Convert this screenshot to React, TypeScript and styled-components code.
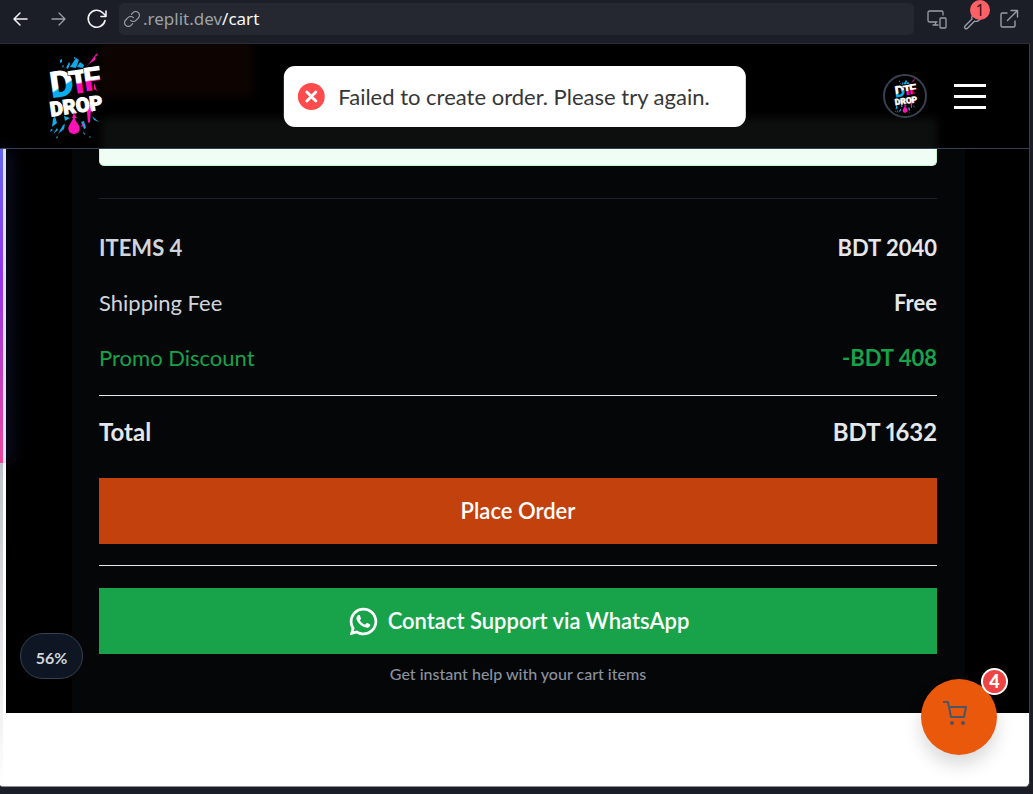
import React from "react";
import styled, { createGlobalStyle } from "styled-components";
import { RiWhatsappLine } from "react-icons/ri";

const GlobalStyle = createGlobalStyle`
  *, *::before, *::after { box-sizing: border-box; }
  body {
    margin: 0;
    background: #1b1e27;
    font-family: Lato, "Open Sans", sans-serif;
  }
  button { font-family: inherit; border: 0; padding: 0; cursor: pointer; }
`;

const Shell = styled.div`
  display: flex;
  flex-direction: column;
  min-height: 100vh;
  padding: 0 3px 7px 0;
  background: #1b1e27;
`;

const BrowserBar = styled.div`
  display: flex;
  align-items: center;
  height: 44px;
  padding: 3px 10px 8px 10px;
  gap: 16px;
  border-bottom: 1px solid #2b2e38;
  background: #1b1e27;
`;

const ToolButton = styled.button<{ $dim?: boolean }>`
  position: relative;
  display: flex;
  align-items: center;
  justify-content: center;
  width: 22px;
  height: 22px;
  background: none;
  color: ${(p) => (p.$dim ? "#9a9ea8" : "#f2f3f5")};
`;

const AddressBar = styled.label`
  display: flex;
  flex: 1;
  align-items: center;
  gap: 3px;
  height: 32px;
  margin-left: -5px;
  margin-right: -4px;
  padding: 0 5px;
  border-radius: 5px;
  background: #252831;
  color: #9da2a6;
`;

const Address = styled.span`
  font: 17px/22px "Noto Sans", sans-serif;
  b { font-weight: 400; color: #f5f9fc; }
`;

const Nav = styled.nav`
  display: flex;
  gap: 16px;
`;

const Tools = styled(Nav)`
  gap: 14px;
`;

const AlertCount = styled.span`
  position: absolute;
  top: -8px;
  right: -6px;
  width: 20px;
  height: 20px;
  border-radius: 50%;
  background: #ff6166;
  color: #3c1518;
  font: 16px/20px "Noto Sans", sans-serif;
  text-align: center;
`;

const Preview = styled.div`
  position: relative;
  display: flex;
  flex: 1;
  flex-direction: column;
  border-right: 1px solid #3a3d46;
  border-bottom: 1px solid #8e9096;
  border-radius: 0 0 5px 3px;
  overflow: hidden;
  background: #fff;
`;

const Header = styled.header`
  position: relative;
  display: flex;
  align-items: center;
  justify-content: space-between;
  height: 105px;
  padding: 0 43px 0 46px;
  border-bottom: 1px solid #374151;
  background: #000;
  overflow: hidden;
  &::before, &::after {
    content: "";
    position: absolute;
    filter: blur(4px);
  }
  &::before { left: 99px; top: -8px; width: 154px; height: 61px; background: #0d0401; }
  &::after { left: 101px; right: 92px; top: 74px; height: 44px; background: #0d0e0e; }
`;

const LogoLink = styled.a`
  display: flex;
  z-index: 1;
`;

const HeaderActions = styled.div`
  display: flex;
  align-items: center;
  gap: 27px;
  z-index: 1;
`;

const Avatar = styled.button`
  display: flex;
  align-items: center;
  justify-content: center;
  width: 44px;
  height: 44px;
  border: 2px solid #374151;
  border-radius: 50%;
  background: #000;
`;

const MenuButton = styled.button`
  display: flex;
  flex-direction: column;
  justify-content: space-between;
  width: 32px;
  height: 25px;
  background: none;
  span { height: 3px; background: #fff; }
`;

const Toast = styled.div`
  position: absolute;
  top: 22px;
  left: 50%;
  transform: translateX(-50%);
  z-index: 3;
  display: flex;
  align-items: center;
  gap: 14px;
  height: 61px;
  padding: 0 36px 0 14px;
  border-radius: 11px;
  background: #fff;
  color: #363636;
  font-size: 22px;
  line-height: 30px;
  white-space: nowrap;
`;

const Page = styled.div`
  display: flex;
`;

const Progress = styled.div`
  position: relative;
  flex: none;
  width: 6px;
  margin-bottom: -74px;
  background: linear-gradient(#b9bcc2, #c4c7cc 55%, #fff);
  border-right: 3px solid #fff;
`;

const ProgressFill = styled.div`
  width: 6px;
  height: 314px;
  border-right: 3px solid #dfe4fb;
  background: linear-gradient(#6366f1, #9333ea 40%, #ec4899);
  background-clip: padding-box;
  box-shadow: 2px 0 18px #3b4ec070;
`;

const Main = styled.main`
  flex: 1;
  padding: 0 64px 0 66px;
  background: #000;
`;

const Card = styled.section`
  padding: 0 28px 28px 27px;
  background: #040608;
`;

const Notice = styled.div`
  height: 17px;
  border: 1px solid #bbf7d0;
  border-top: 0;
  border-radius: 0 0 5px 5px;
  background: #f0fdf4;
`;

const Summary = styled.dl`
  display: flex;
  flex-direction: column;
  gap: 27px;
  margin: 32px 0 0;
  padding: 35px 0 23px;
  border-top: 1px solid #1f2329;
`;

const Row = styled.div<{ $tone?: "green" | "total" }>`
  display: flex;
  justify-content: space-between;
  font-size: ${(p) => (p.$tone === "total" ? 24 : 22)}px;
  line-height: 28px;
  font-variant-numeric: ${(p) => (p.$tone === "total" ? "proportional-nums" : "normal")};
  color: ${(p) => (p.$tone === "green" ? "#16a34a" : p.$tone === "total" ? "#e5e7eb" : "#d1d5db")};
  dt { font-weight: ${(p) => (p.$tone === "total" ? 700 : 400)}; }
  dd { margin: 0; font-weight: 700; color: ${(p) => (p.$tone === "green" ? "#16a34a" : "#e5e7eb")}; }
`;

const Strong = styled.span`
  font-weight: 700;
`;

const TotalBlock = styled.dl`
  margin: 0;
  padding: 22px 0 32px;
  border-top: 1px solid #e5e7eb;
`;

const ActionButton = styled.button<{ $color: string }>`
  display: flex;
  align-items: center;
  justify-content: center;
  gap: 8px;
  width: 100%;
  height: 66px;
  background: ${(p) => p.$color};
  color: #fff;
  font-size: 22px;
  line-height: 28px;
  font-weight: 600;
`;

const Support = styled.div`
  margin-top: 21px;
  padding-top: 22px;
  border-top: 1px solid #e5e7eb;
`;

const Hint = styled.p`
  margin: 9px 0 0;
  color: #8b919d;
  font-size: 16px;
  font-weight: 500;
  line-height: 22px;
  text-align: center;
`;

const Footer = styled.div`
  flex: 1;
  min-height: 73px;
`;

const ScrollPill = styled.div`
  position: absolute;
  left: 20px;
  bottom: 107px;
  z-index: 2;
  width: 63px;
  height: 46px;
  padding-top: 3px;
  border: 1px solid #374151;
  border-radius: 23px;
  background: #0f1623;
  color: #d1d5db;
  font-size: 16px;
  font-weight: 700;
  line-height: 42px;
  text-align: center;
`;

const CartButton = styled.button`
  position: absolute;
  right: 32px;
  bottom: 31px;
  z-index: 2;
  width: 76px;
  height: 76px;
  padding: 2px 8px 8px 0;
  border-radius: 50%;
  background: #ea580c;
  box-shadow: 0 10px 18px #00000026;
`;

const CartCount = styled.span`
  position: absolute;
  top: -11px;
  right: -11px;
  width: 27px;
  height: 27px;
  border: 2px solid #fff;
  border-radius: 50%;
  background: #ef4444;
  color: #fff;
  font-size: 18px;
  font-weight: 900;
  line-height: 23px;
  text-align: center;
`;

function LogoMark({ width, height, id }: { width: number; height: number; id: string }) {
  const cyan = `${id}-cyan`;
  const pink = `${id}-pink`;
  const face = { fontFamily: 'Roboto, "Liberation Sans", sans-serif', fontWeight: 900 };
  return (
    <svg width={width} height={height} viewBox="0 0 58 86" role="img" aria-label="DTF Drop">
      <defs>
        <linearGradient id={cyan} x1="0" y1="0" x2="0.25" y2="1">
          <stop offset="0.62" stopColor="#fff" />
          <stop offset="0.66" stopColor="#08aef0" />
        </linearGradient>
        <linearGradient id={pink} x1="0" y1="0" x2="0" y2="1">
          <stop offset="0.52" stopColor="#fff" />
          <stop offset="0.56" stopColor="#ff08b8" />
        </linearGradient>
      </defs>
      <g fill="#12a9e8">
        <path d="M24 14l6-9 3 2-3 8zM31 14l3-5 4 3-1 3zM20 15l3-6 1 2-2 5zM14 7l2-1v3l-2 1zM28 4l2 1-2 1zM16 13l2-1-1 3zM9 63l2 7-5 4 1-8zM18 63l6 2-5 3zM11 75l-4 6 5-4zM17 72l-5 9 6-5 1-5zM35 69l3 7 2-1-2-7zM46 63l7 6-5-2zM5 76l-1 3 3-2zM37 78l2 3-1 1zM10 84l2-1-1 3zM43 83l2 1-1 1z" />
      </g>
      <g fill="#ff12b6">
        <path d="M45 8l5-7-1 6-6 4-3 3zM49 2l3-2-1 3zM41 59l1 11 2-1 1-13 2 4V47l-6 3zM37 70l-2 4 2-1zM48 30l3 8-3-2z" />
        <path d="M28 62q1 6 4 9c4 6 0 10-4 10s-8-4-4-10q3-4 4-9z" />
      </g>
      <g transform="rotate(-8 28 40)" {...face}>
        <text x="5" y="42" fontSize="37" fill={`url(#${cyan})`}>D</text>
        <text x="24" y="41" fontSize="33" fill={`url(#${pink})`} stroke="#000" strokeWidth="1" paintOrder="stroke">T</text>
        <text x="39" y="40" fontSize="33" fill={`url(#${pink})`} stroke="#000" strokeWidth="1" paintOrder="stroke">F</text>
        <text x="2" y="60" fontSize="20" fill="#fff" stroke="#fff" strokeWidth="1">DROP</text>
      </g>
      <path d="M26 65q2-5 2-7q0 4 3 7z" fill="#ff12b6" />
    </svg>
  );
}

const line = { fill: "none", stroke: "currentColor", strokeLinecap: "round", strokeLinejoin: "round" } as const;

export default function App() {
  return (
    <>
      <GlobalStyle />
      <Shell>
        <BrowserBar>
          <Nav aria-label="History">
            <ToolButton aria-label="Back">
              <svg width="22" height="22" viewBox="0 0 22 22" {...line} strokeWidth="1.5"><path d="M17 11H4M10 5l-6 6 6 6" /></svg>
            </ToolButton>
            <ToolButton $dim aria-label="Forward">
              <svg width="22" height="22" viewBox="0 0 22 22" {...line} strokeWidth="1.3"><path d="M4 11h13M11 5l6 6-6 6" /></svg>
            </ToolButton>
            <ToolButton aria-label="Reload">
              <svg width="22" height="22" viewBox="0 0 22 22" {...line} strokeWidth="1.6"><path d="M19 12.500a8.500 8.500 0 1 1-2-7.500l3 3M20 3v5.500h-5" /></svg>
            </ToolButton>
          </Nav>
          <AddressBar>
            <svg width="16" height="16" viewBox="0 0 24 24" {...line} strokeWidth="1.7" aria-hidden="true">
              <path d="M10 14a5.500 5.500 0 0 0 8 0l3.500-3.500a5.600 5.600 0 0 0-8-8L11 5M14 10a5.500 5.500 0 0 0-8 0l-3.500 3.500a5.600 5.600 0 0 0 8 8L13 19" />
            </svg>
            <Address>.replit.dev<b>/cart</b></Address>
          </AddressBar>
          <Tools aria-label="Preview tools">
            <ToolButton $dim aria-label="Device size">
              <svg width="22" height="22" viewBox="0 0 22 22" {...line} strokeWidth="1.3">
                <path d="M11 14H3.500a1.500 1.500 0 0 1-1.500-1.500v-8A1.500 1.500 0 0 1 3.500 3h12A1.500 1.500 0 0 1 17 4.500V7M9.500 14v3M7 17h5" />
                <rect x="14" y="10" width="6" height="10" rx="1" />
              </svg>
            </ToolButton>
            <ToolButton $dim aria-label="Developer tools">
              <svg width="22" height="22" viewBox="0 0 22 22" {...line} strokeWidth="1.4">
                <path d="M13 5a5 5 0 0 0-3 6l-7 7a1.500 1.500 0 0 0 2.500 2.200l7-7a5 5 0 0 0 6-3" />
              </svg>
              <AlertCount>1</AlertCount>
            </ToolButton>
            <ToolButton $dim aria-label="Open in new tab">
              <svg width="22" height="22" viewBox="0 0 22 22" {...line} strokeWidth="1.4">
                <path d="M9 5H4.500A1.500 1.500 0 0 0 3 6.500v11A1.500 1.500 0 0 0 4.500 19h11a1.500 1.500 0 0 0 1.500-1.500V13M9.500 12.500l10-10M13 2.500h6.500V9" />
              </svg>
            </ToolButton>
          </Tools>
        </BrowserBar>

        <Preview>
          <Header>
            <LogoLink href="#home"><LogoMark id="brand" width={58} height={86} /></LogoLink>
            <HeaderActions>
              <Avatar aria-label="Account"><LogoMark id="account" width={25} height={37} /></Avatar>
              <MenuButton aria-label="Menu"><span /><span /><span /></MenuButton>
            </HeaderActions>
          </Header>

          <Toast role="status">
            <svg width="27" height="27" viewBox="0 0 27 27" aria-hidden="true">
              <circle cx="13.500" cy="13.500" r="13.500" fill="#ff4b4b" />
              <path d="M9 9l9 9M18 9l-9 9" stroke="#fff" strokeWidth="3" strokeLinecap="round" />
            </svg>
            Failed to create order. Please try again.
          </Toast>

          <Page>
            <Progress><ProgressFill /></Progress>
            <Main>
              <Card>
                <Notice />
                <Summary>
                  <Row><dt><Strong>ITEMS 4</Strong></dt><dd>BDT 2040</dd></Row>
                  <Row><dt>Shipping Fee</dt><dd>Free</dd></Row>
                  <Row $tone="green"><dt>Promo Discount</dt><dd>-BDT 408</dd></Row>
                </Summary>
                <TotalBlock>
                  <Row $tone="total"><dt>Total</dt><dd>BDT 1632</dd></Row>
                </TotalBlock>
                <ActionButton $color="#c2410c">Place Order</ActionButton>
                <Support>
                  <ActionButton $color="#18a34a"><RiWhatsappLine size={33} aria-hidden="true" />Contact Support via WhatsApp</ActionButton>
                  <Hint>Get instant help with your cart items</Hint>
                </Support>
              </Card>
            </Main>
          </Page>
          <Footer />

          <ScrollPill>56%</ScrollPill>
          <CartButton aria-label="Cart, 4 items">
            <svg width="24" height="24" viewBox="0 0 24 24" fill="none" stroke="#4b5563" strokeWidth="2" strokeLinejoin="round">
              <path d="M0 1h5l3 15h13l2-10H6" />
              <circle cx="9" cy="22" r="2" fill="#4b5563" stroke="none" />
              <circle cx="20" cy="22" r="2" fill="#4b5563" stroke="none" />
            </svg>
            <CartCount>4</CartCount>
          </CartButton>
        </Preview>
      </Shell>
    </>
  );
}
